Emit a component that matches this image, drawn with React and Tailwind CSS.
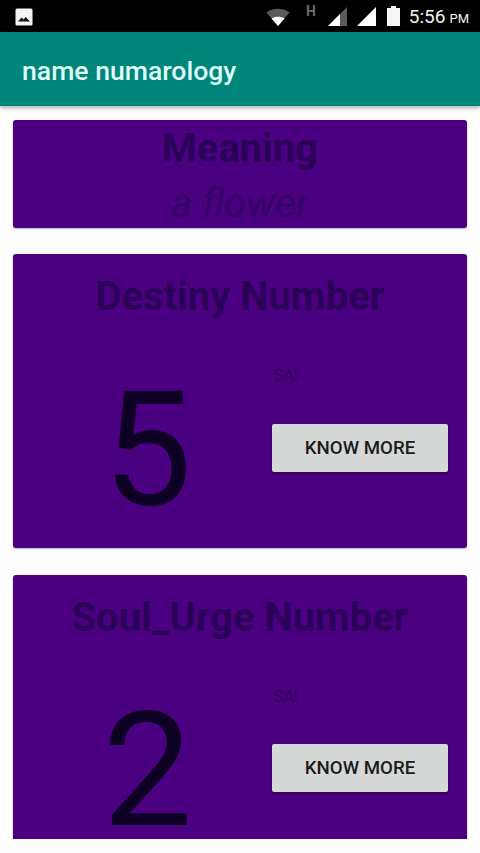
import React from "react";

function StatusBar() {
  return (
    <div className="h-8 bg-black flex items-center pl-[15px] pr-[11px] text-white shrink-0">
      <svg width="18" height="18" viewBox="0 0 18 18" className="mt-0.5">
        <rect x="0.5" y="0.5" width="17" height="17" rx="1.5" fill="#f4f4f4" />
        <path d="M3 13.5 L6.5 9.5 L8.6 11.6 L10.6 9 L15 13.5 Z" fill="#111" />
      </svg>
      <div className="ml-auto flex items-center">
        <svg width="24" height="20" viewBox="0 0 24 20" className="mt-0.5">
          <path d="M0.5 5.5 C6.5 0.5 17.5 0.5 23.5 5.5 L12 19 Z" fill="#5a5a5a" />
          <path d="M5.5 11.5 C9 9 15 9 18.5 11.5 L12 19 Z" fill="#ffffff" />
        </svg>
        <span className="ml-[16px] mb-[10px] text-[14px] leading-none font-bold text-[#6a6a6a]">H</span>
        <svg width="20" height="20" viewBox="0 0 20 20" className="ml-[12px] mt-[2px]">
          <path d="M0 19 L19 0 V19 Z" fill="#5a5a5a" />
          <path d="M0 19 L12 7 V19 Z" fill="#ffffff" />
        </svg>
        <svg width="20" height="20" viewBox="0 0 20 20" className="ml-[9px] mt-[2px]">
          <path d="M0 19 L19 0 V19 Z" fill="#ffffff" />
        </svg>
        <svg width="13" height="20" viewBox="0 0 13 20" className="ml-[10px]">
          <path d="M4 0 H9 V2 H13 V20 H0 V2 H4 Z" fill="#f6f6f6" />
        </svg>
        <span className="ml-[9px] flex items-baseline gap-[4px] leading-none text-[#f2f2f2]">
          <span className="text-[19px]">5:56</span>
          <span className="text-[13px]">PM</span>
        </span>
      </div>
    </div>
  );
}

function NumberCard({ title, digit, buttonClass, className }) {
  return (
    <section className={`bg-[#4a0080] rounded-[3px] shadow-[0_1px_2px_rgba(0,0,0,0.3)] h-[294px] shrink-0 flex flex-col ${className}`}>
      <h2 className="text-center text-[40px] leading-[47px] font-bold text-[#2a0058] pt-[19px] pb-[3px] h-[69px] whitespace-nowrap">{title}</h2>
      <div className="flex flex-1 min-h-0">
        <div className="w-[259px] shrink-0 text-center text-[160px] leading-[188px] text-[#0e0024] pt-[33px] pl-[10px]">{digit}</div>
        <div className="flex flex-col flex-1 pr-[19px]">
          <p className="text-[16px] leading-[19px] text-[#32005f] mt-[43px] ml-[2px]">SAI</p>
          <button className={`h-12 bg-[#d6d8d8] rounded-[2px] text-[#1c1c1c] text-[18.7px] font-medium shadow-[0_1px_3px_rgba(0,0,0,0.4)] ${buttonClass}`}>
            KNOW MORE
          </button>
        </div>
      </div>
    </section>
  );
}

export default function App() {
  return (
    <div className="w-[480px] h-[853px] bg-[#fdfdfd] flex flex-col overflow-hidden font-['Roboto',sans-serif]">
      <StatusBar />
      <header className="h-[74px] bg-[#00857a] flex items-center px-[22px] shadow-[0_2px_4px_rgba(0,0,0,0.3)] shrink-0 z-10">
        <h1 className="text-[26.6px] font-medium text-[#dffbf7] mt-[4px]">name numarology</h1>
      </header>
      <main className="h-[733px] overflow-hidden px-[13px] pt-[14px] flex flex-col">
        <section className="bg-[#4a0080] rounded-[3px] shadow-[0_1px_2px_rgba(0,0,0,0.3)] h-[108px] shrink-0 text-center">
          <h2 className="text-[40px] leading-[47px] font-bold text-[#2a0058] pt-[5px] h-[60px]">Meaning</h2>
          <p className="text-[40px] leading-[47px] italic text-[#34006a]">a flower</p>
        </section>
        <NumberCard title="Destiny Number" digit="5" buttonClass="mt-[39px]" className="mt-[26px]" />
        <NumberCard title="Soul_Urge Number" digit="2" buttonClass="mt-[38px]" className="mt-[27px]" />
      </main>
    </div>
  );
}
